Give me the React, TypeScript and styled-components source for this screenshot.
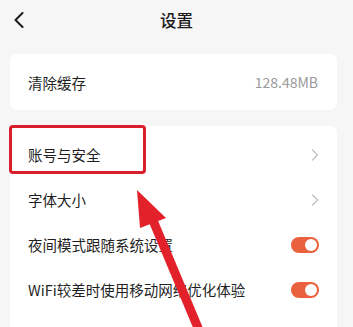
import React from "react";
import styled, { createGlobalStyle } from "styled-components";

const Global = createGlobalStyle`
  html, body { margin: 0; padding: 0; background: #f6f6f6; }
  body { font-family: "Noto Sans CJK SC", "Noto Sans", sans-serif; -webkit-font-smoothing: antialiased; }
`;

const Page = styled.div`
  position: relative;
  width: 353px;
  height: 327px;
  overflow: hidden;
  background: #f6f6f6;
`;

const Header = styled.div`
  display: grid;
  grid-template-columns: 48px 1fr 48px;
  align-items: center;
  height: 40px;
`;

const BackButton = styled.div`
  display: flex;
  align-items: center;
  padding-left: 13px;
  height: 40px;
`;

const Title = styled.div`
  text-align: center;
  font-size: 16.5px;
  font-weight: 500;
  color: #1a1a1a;
  line-height: 40px;
`;

const Content = styled.div`
  display: flex;
  flex-direction: column;
  gap: 16px;
  padding: 14px 16px 0 10px;
`;

const Card = styled.div<{ $padTop?: number }>`
  background: #ffffff;
  border-radius: 7px;
  padding-top: ${(p) => p.$padTop ?? 0}px;
  display: flex;
  flex-direction: column;
`;

const Row = styled.div<{ $h?: number }>`
  height: ${(p) => p.$h ?? 45}px;
  display: flex;
  align-items: center;
  justify-content: space-between;
  padding: 0 18px 0 18px;
`;

const Label = styled.span`
  font-size: 14.5px;
  color: #1f1f1f;
  letter-spacing: 0;
`;

const Value = styled.span`
  font-size: 14px;
  color: #9a9a9a;
  padding-right: 1px;
`;

const Toggle = styled.div<{ $on: boolean }>`
  width: 28px;
  height: 16px;
  border-radius: 8px;
  background: ${(p) => (p.$on ? "#e9613d" : "#d8d8d8")};
  display: flex;
  align-items: center;
  justify-content: ${(p) => (p.$on ? "flex-end" : "flex-start")};
  padding: 0 2px;
  box-sizing: border-box;
`;

const Knob = styled.div`
  width: 12px;
  height: 12px;
  border-radius: 50%;
  background: #ffffff;
`;

const Highlight = styled.div`
  position: absolute;
  left: 9px;
  top: 125px;
  width: 137px;
  height: 49px;
  box-sizing: border-box;
  border: 3.5px solid #d91f2b;
  border-radius: 4px;
  pointer-events: none;
`;

const ArrowLayer = styled.svg`
  position: absolute;
  left: 0;
  top: 0;
  pointer-events: none;
`;

const Chevron = () => (
  <svg width="8" height="12" viewBox="0 0 8 12">
    <path d="M1.5 1 L6.5 6 L1.5 11" fill="none" stroke="#c2c2c2" strokeWidth="1.3" strokeLinecap="round" strokeLinejoin="round" />
  </svg>
);

const BackIcon = () => (
  <svg width="12" height="16" viewBox="0 0 12 16">
    <path d="M9.5 1 L2.5 8 L9.5 15" fill="none" stroke="#1a1a1a" strokeWidth="2" strokeLinecap="round" strokeLinejoin="round" />
  </svg>
);

type Item = { label: string; kind: "chevron" | "toggle" };

const items: Item[] = [
  { label: "账号与安全", kind: "chevron" },
  { label: "字体大小", kind: "chevron" },
  { label: "夜间模式跟随系统设置", kind: "toggle" },
  { label: "WiFi较差时使用移动网络优化体验", kind: "toggle" },
  { label: "消息推送设置", kind: "chevron" },
];

export default function App() {
  return (
    <>
      <Global />
      <Page>
        <Header>
          <BackButton>
            <BackIcon />
          </BackButton>
          <Title>设置</Title>
          <div />
        </Header>
        <Content>
          <Card>
            <Row $h={56}>
              <Label>清除缓存</Label>
              <Value>128.48MB</Value>
            </Row>
          </Card>
          <Card $padTop={6}>
            {items.map((it) => (
              <Row key={it.label}>
                <Label>{it.label}</Label>
                {it.kind === "chevron" ? (
                  <Chevron />
                ) : (
                  <Toggle $on>
                    <Knob />
                  </Toggle>
                )}
              </Row>
            ))}
          </Card>
        </Content>
        <Highlight />
        <ArrowLayer width="353" height="327" viewBox="0 0 353 327">
          <line x1="152" y1="218" x2="201" y2="335" stroke="#e2212b" strokeWidth="9" />
          <polygon points="137,190 166,218 140,228" fill="#e2212b" />
        </ArrowLayer>
      </Page>
    </>
  );
}
